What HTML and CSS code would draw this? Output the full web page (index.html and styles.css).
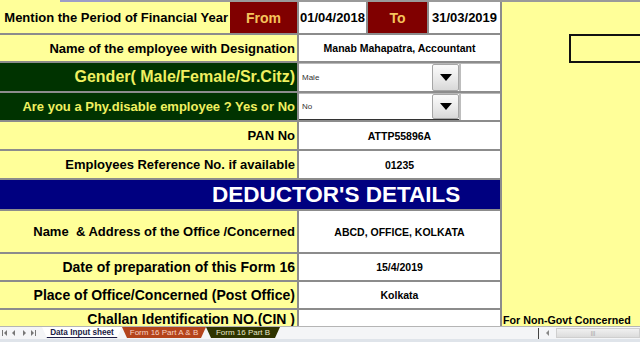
FILE: index.html
```html
<!DOCTYPE html>
<html>
<head>
<meta name="viewport" content="width=device-width, user-scalable=no">
<link rel="stylesheet" href="styles.css">
<title>Form 16 - Data Input sheet</title>
</head>
<body>
<div class="topline"></div>
<div class="sheet">
	<div class="form">
		<div class="row r1">
			<div class="period">
				<div class="label">Mention the Period of Financial Year</div>
				<div class="tag">From</div>
			</div>
			<div class="period">
				<div class="val date">01/04/2018</div>
				<div class="tag">To</div>
				<div class="val date last">31/03/2019</div>
			</div>
		</div>
		<div class="row r2">
			<div class="label">Name of the employee with Designation</div>
			<div class="val">Manab Mahapatra, Accountant</div>
		</div>
		<div class="row r3 green">
			<div class="label big">Gender( Male/Female/Sr.Citz)</div>
			<div class="pick">
				<div class="drop">
					<span class="choice">Male</span>
					<span class="arrow"><svg width="12" height="7" viewBox="0 0 12 7"><polygon points="0,0 12,0 6,7" fill="#000"/></svg></span>
				</div>
				<div class="spare"></div>
			</div>
		</div>
		<div class="row r4 green">
			<div class="label">Are you a Phy.disable employee ? Yes or No</div>
			<div class="pick">
				<div class="drop under">
					<span class="choice">No</span>
					<span class="arrow"><svg width="12" height="7" viewBox="0 0 12 7"><polygon points="0,0 12,0 6,7" fill="#000"/></svg></span>
				</div>
				<div class="spare"></div>
			</div>
		</div>
		<div class="row r5">
			<div class="label">PAN No</div>
			<div class="val">ATTP55896A</div>
		</div>
		<div class="row r6">
			<div class="label">Employees Reference No. if available</div>
			<div class="val">01235</div>
		</div>
		<div class="row r7 head">
			<div class="title">DEDUCTOR'S DETAILS</div>
		</div>
		<div class="row r8">
			<div class="label">Name&nbsp; &amp; Address of the Office /Concerned</div>
			<div class="val">ABCD, OFFICE, KOLKATA</div>
		</div>
		<div class="row r9">
			<div class="label mid">Date of preparation of this Form 16</div>
			<div class="val">15/4/2019</div>
		</div>
		<div class="row r10">
			<div class="label mid">Place of Office/Concerned (Post Office)</div>
			<div class="val">Kolkata</div>
		</div>
		<div class="row r11">
			<div class="label mid">Challan Identification NO.(CIN )</div>
			<div class="val"></div>
		</div>
	</div>
	<div class="side">
		<div class="box"></div>
		<div class="note">For Non-Govt Concerned</div>
	</div>
</div>
<div class="tabbar">
	<div class="nav">
		<svg width="40" height="8" viewBox="0 0 40 8">
			<rect x="2" y="1" width="1" height="6" fill="#777"/>
			<polygon points="7,1 7,7 4,4" fill="#777"/>
			<polygon points="15,1 15,7 12,4" fill="#777"/>
			<polygon points="23,1 23,7 26,4" fill="#777"/>
			<polygon points="31,1 31,7 34,4" fill="#777"/>
			<rect x="35" y="1" width="1" height="6" fill="#777"/>
		</svg>
	</div>
	<div class="tab active">Data Input sheet</div>
	<div class="tab red">Form 16 Part A &amp; B</div>
	<div class="tab olive">Form 16 Part B</div>
	<div class="scroll">
		<span class="split"></span>
		<svg width="8" height="8" viewBox="0 0 8 8"><polygon points="5,1 5,7 2,4" fill="#888"/></svg>
		<div class="track"><span class="grip">|||</span></div>
	</div>
</div>
</body>
</html>
```

FILE: styles.css
```css
* {
	box-sizing: border-box;
}
html, body {
	margin: 0;
	padding: 0;
	width: 640px;
	height: 342px;
	overflow: hidden;
	background-color: #ffff99;
	font-family: "Liberation Sans", Arial, sans-serif;
	font-weight: bold;
}
.topline {
	height: 2px;
	background: linear-gradient(to right, #ffff99 0, #ffff99 60px, #9d9dc8 60px, #9d9dc8 110px, #9a9a9a 110px);
}
.sheet {
	display: flex;
	height: 324px;
	overflow: hidden;
}
.form {
	width: 502px;
	border-right: 2px solid #8c8c8c;
	display: flex;
	flex-direction: column;
}
.row {
	display: grid;
	grid-template-columns: 299px 201px;
	border-bottom: 2px solid #8c8c8c;
	flex-shrink: 0;
}
.label {
	background-color: #ffff99;
	color: #000;
	font-size: 13px;
	text-align: right;
	padding-right: 2px;
	border-right: 2px solid #8c8c8c;
	display: flex;
	align-items: center;
	justify-content: flex-end;
	white-space: nowrap;
}
.label.big {
	font-size: 16px;
}
.label.mid {
	font-size: 14px;
}
.val {
	background-color: #fff;
	color: #000;
	font-size: 10.5px;
	display: flex;
	align-items: center;
	justify-content: center;
}
.r1 { height: 33px; }
.r2 { height: 28px; }
.r3 { height: 30px; }
.r4 { height: 29px; }
.r5 { height: 29px; }
.r6 { height: 29px; }
.r7 { height: 31px; }
.r8 { height: 43px; }
.r9 { height: 28px; }
.r10 { height: 28px; }
.r11 { height: 16px; border-bottom: none; }
.r11 .label {
	align-items: flex-end;
	line-height: 14px;
}

.period {
	display: flex;
}
.period .label {
	width: 230px;
	border-right: none;
}
.tag {
	background-color: #800000;
	color: #f5c45c;
	font-size: 14px;
	display: flex;
	align-items: center;
	justify-content: center;
	border-right: 2px solid #8c8c8c;
	width: 69px;
}
.period:last-child .tag {
	width: 63px;
	border-left: 2px solid #8c8c8c;
}
.date {
	font-size: 13px;
	width: 67px;
	justify-content: flex-start;
	padding-left: 1px;
}
.date.last {
	width: 71px;
	padding-left: 3px;
}

.green .label {
	background-color: #003300;
	color: #f0f060;
}
.pick {
	display: flex;
	background-color: #fff;
}
.drop {
	width: 160px;
	display: flex;
	align-items: stretch;
	justify-content: space-between;
	border-top: 1px solid #b8b8b8;
}
.drop.under {
	border-bottom: 1px solid #333;
}
.choice {
	font-weight: normal;
	font-size: 8px;
	color: #333;
	padding-left: 3px;
	display: flex;
	align-items: center;
}
.arrow {
	width: 27px;
	background: linear-gradient(to bottom, #fbfbfb 0%, #e8e8e8 60%, #d8d8d8 100%);
	border: 1px solid #a6a6a6;
	border-radius: 2px;
	display: flex;
	align-items: center;
	justify-content: center;
}
.spare {
	flex: 1;
	border-left: 2px solid #bdbdbd;
	border-top: 1px solid #b8b8b8;
}

.head {
	background-color: #000080;
	display: flex;
}
.title {
	color: #fff;
	font-size: 22.5px;
	padding-left: 212px;
	display: flex;
	align-items: center;
	width: 100%;
}

.side {
	flex: 1;
	background-color: #ffff99;
}
.box {
	margin-top: 32px;
	margin-left: 67px;
	height: 29px;
	border: 2px solid #111;
	border-right: none;
}
.note {
	margin-top: 250px;
	margin-left: 1px;
	font-size: 10.7px;
	line-height: 14px;
	color: #000;
	white-space: nowrap;
}

.tabbar {
	height: 16px;
	background: linear-gradient(to bottom, #f4f5f7 0, #f4f5f7 12px, #dfe4ea 12px);
	border-top: 1px solid #b5b5b5;
	display: flex;
	align-items: flex-start;
	font-size: 8px;
	position: relative;
}
.nav {
	width: 42px;
	height: 11px;
	display: flex;
	align-items: center;
}
.tab {
	height: 11px;
	line-height: 11px;
	clip-path: polygon(0 0, 100% 0, calc(100% - 5px) 100%, 5px 100%);
	white-space: nowrap;
	text-align: center;
	overflow: hidden;
}
.tab.active {
	background-color: #fff;
	color: #1c1c44;
	border-bottom: 1px solid #1c1c44;
	font-size: 8.2px;
	width: 80px;
}
.tab.red {
	background-color: #b4441c;
	color: #f9d3c3;
	font-weight: normal;
	width: 84px;
}
.tab.olive {
	background-color: #2f3400;
	color: #e6e6c6;
	font-weight: normal;
	width: 74px;
}
.scroll {
	position: absolute;
	left: 538px;
	top: 0;
	right: 0;
	height: 12px;
	display: flex;
	align-items: center;
}
.split {
	width: 1px;
	height: 11px;
	background-color: #444;
	margin-right: 5px;
}
.track {
	flex: 1;
	height: 10px;
	margin-left: 4px;
	background: linear-gradient(to bottom, #f0f0f0, #dcdcdc);
	border: 1px solid #cfcfcf;
	font-size: 6px;
	font-weight: normal;
	color: #999;
	text-align: center;
	line-height: 8px;
}
.grip {
	margin-right: 10px;
}
```
